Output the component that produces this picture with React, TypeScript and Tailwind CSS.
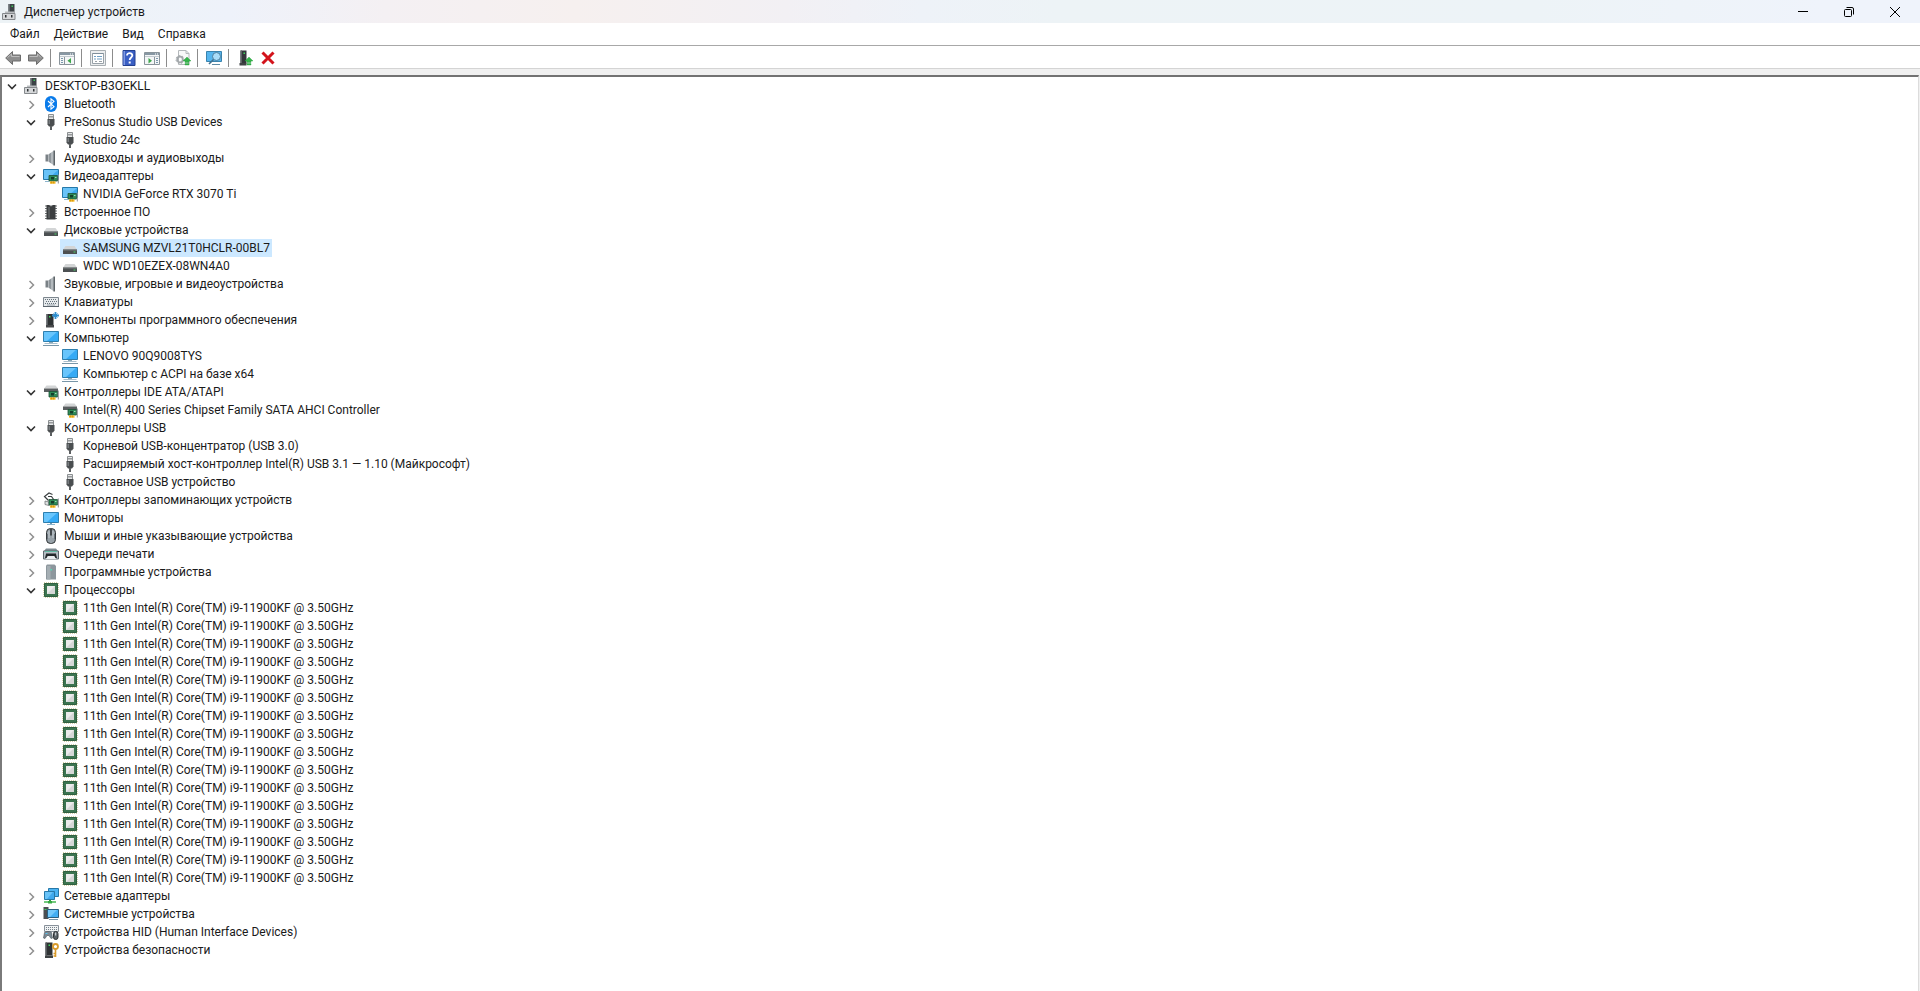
import { FC, ReactNode, useState } from "react";
import clsx from "clsx";

type IconName =
  | "computer"
  | "bluetooth"
  | "usb"
  | "speaker"
  | "display"
  | "firmware"
  | "disk"
  | "keyboard"
  | "software"
  | "pc"
  | "ide"
  | "storage"
  | "monitor"
  | "mouse"
  | "printer"
  | "tower"
  | "cpu"
  | "network"
  | "system"
  | "hid"
  | "security";

interface TreeNode {
  id: string;
  label: string;
  icon: IconName;
  open?: boolean;
  branch?: boolean;
  children?: TreeNode[];
}

const cpus: TreeNode[] = Array.from({ length: 16 }, (_, i) => ({
  id: `cpu-${i}`,
  label: "11th Gen Intel(R) Core(TM) i9-11900KF @ 3.50GHz",
  icon: "cpu",
}));

const tree: TreeNode = {
  id: "root",
  label: "DESKTOP-B3OEKLL",
  icon: "computer",
  open: true,
  branch: true,
  children: [
    { id: "bt", label: "Bluetooth", icon: "bluetooth", branch: true },
    {
      id: "presonus",
      label: "PreSonus Studio USB Devices",
      icon: "usb",
      open: true,
      branch: true,
      children: [{ id: "studio", label: "Studio 24c", icon: "usb" }],
    },
    { id: "audio", label: "Аудиовходы и аудиовыходы", icon: "speaker", branch: true },
    {
      id: "video",
      label: "Видеоадаптеры",
      icon: "display",
      open: true,
      branch: true,
      children: [{ id: "rtx", label: "NVIDIA GeForce RTX 3070 Ti", icon: "display" }],
    },
    { id: "firmware", label: "Встроенное ПО", icon: "firmware", branch: true },
    {
      id: "disks",
      label: "Дисковые устройства",
      icon: "disk",
      open: true,
      branch: true,
      children: [
        { id: "samsung", label: "SAMSUNG MZVL21T0HCLR-00BL7", icon: "disk" },
        { id: "wdc", label: "WDC WD10EZEX-08WN4A0", icon: "disk" },
      ],
    },
    { id: "sound", label: "Звуковые, игровые и видеоустройства", icon: "speaker", branch: true },
    { id: "keyboards", label: "Клавиатуры", icon: "keyboard", branch: true },
    { id: "software", label: "Компоненты программного обеспечения", icon: "software", branch: true },
    {
      id: "pc",
      label: "Компьютер",
      icon: "pc",
      open: true,
      branch: true,
      children: [
        { id: "lenovo", label: "LENOVO 90Q9008TYS", icon: "pc" },
        { id: "acpi", label: "Компьютер с ACPI на базе x64", icon: "pc" },
      ],
    },
    {
      id: "ide",
      label: "Контроллеры IDE ATA/ATAPI",
      icon: "ide",
      open: true,
      branch: true,
      children: [
        { id: "ahci", label: "Intel(R) 400 Series Chipset Family SATA AHCI Controller", icon: "ide" },
      ],
    },
    {
      id: "usb",
      label: "Контроллеры USB",
      icon: "usb",
      open: true,
      branch: true,
      children: [
        { id: "hub", label: "Корневой USB-концентратор (USB 3.0)", icon: "usb" },
        {
          id: "xhci",
          label: "Расширяемый хост-контроллер Intel(R) USB 3.1 — 1.10 (Майкрософт)",
          icon: "usb",
        },
        { id: "composite", label: "Составное USB устройство", icon: "usb" },
      ],
    },
    { id: "storage", label: "Контроллеры запоминающих устройств", icon: "storage", branch: true },
    { id: "monitors", label: "Мониторы", icon: "monitor", branch: true },
    { id: "mice", label: "Мыши и иные указывающие устройства", icon: "mouse", branch: true },
    { id: "print", label: "Очереди печати", icon: "printer", branch: true },
    { id: "swdev", label: "Программные устройства", icon: "tower", branch: true },
    { id: "cpus", label: "Процессоры", icon: "cpu", open: true, branch: true, children: cpus },
    { id: "net", label: "Сетевые адаптеры", icon: "network", branch: true },
    { id: "system", label: "Системные устройства", icon: "system", branch: true },
    { id: "hid", label: "Устройства HID (Human Interface Devices)", icon: "hid", branch: true },
    { id: "security", label: "Устройства безопасности", icon: "security", branch: true },
  ],
};

// small green board with gold contacts, shared by the adapter icons
const board = (
  <>
    <path d="M6 7.500h8.500V13H6z" fill="#2f8a57" stroke="#1c5236" strokeWidth=".8" />
    <path d="M8 9h3v2.500H8z" fill="#143f2a" />
    <path d="M12 9h1.500v1H12z" fill="#9fd8b4" />
    <path d="M7 13.400h5.500v2.300H7z" fill="#f2b41c" />
    <path d="M8.500 13.400v2M10.500 13.400v2" stroke="#b97d0a" strokeWidth=".5" />
    <path d="M15.300 6.500v9" stroke="#8c9196" strokeWidth="1" />
  </>
);

const drawings: Record<IconName, ReactNode> = {
  computer: (
    <>
      <path d="M6.500 0h6v9h-6z" fill="#3c4246" />
      <path d="M6.500 0h1.500v9H6.500z" fill="#666c70" />
      <path d="M9.500 1.500h1.500V3H9.500z" fill="#3fc45a" />
      <path d="M3 7.500h9.500V10H3z" fill="#b9bcbf" />
      <path d="M.5 9.500h12.500v6H.5z" fill="#d5d7d9" stroke="#85898c" />
      <path d="M3 11h1.500v2.500H3zM9 11h1.500v2.500H9z" fill="#2e3234" />
    </>
  ),
  bluetooth: (
    <>
      <rect x="2" width="12" height="16" rx="6" fill="#0a7bea" />
      <path d="M5 5l6 5.700L8 13.200V2.800l3 2.500L5 11" fill="none" stroke="#fff" strokeWidth="1.100" />
    </>
  ),
  usb: (
    <>
      <path d="M5.500.5h5v5h-5z" fill="#e4e6e7" stroke="#8b8f91" />
      <path d="M6.500 2h1v1.500h-1zM8.500 2h1v1.500h-1z" fill="#4b4f52" />
      <path d="M4.500 5h7v5.500L10 12.500H6l-1.500-2z" fill="#4a4e50" />
      <path d="M5.500 6h1.500v4H5.500z" fill="#767b7e" />
      <path d="M7 12h2v4H7z" fill="#5b5f61" />
    </>
  ),
  speaker: (
    <>
      <path d="M2.500 4.500h2.500v7H2.500z" fill="#7a8186" />
      <path d="M5.500 4.500L11 .5v15l-5.500-4z" fill="#b3b9bd" />
      <path d="M5.500 4.500L8 2.700v10.600l-2.500-1.800z" fill="#8f969b" />
      <path d="M10.500.5H12v15h-1.500z" fill="#5d6468" />
    </>
  ),
  display: (
    <>
      <path d="M.5 1.500h15v10H.5z" fill="#3fa9ee" stroke="#2678a8" />
      <path d="M1 2h14L5 11H1z" fill="#69c3f8" />
      <path d="M2 13.500h4" stroke="#8cb4cc" />
      {board}
    </>
  ),
  firmware: (
    <>
      <path
        d="M2 2h12M2 4.500h12M2 7h12M2 9.500h12M2 12h12M2 14.500h12"
        stroke="#6b6f71"
        strokeWidth="1.200"
      />
      <path d="M3.500 1H6l2 1.500L10 1h2.500v14.500h-9z" fill="#3b3e40" />
      <path d="M5 3h2v11H5z" fill="#55595b" />
    </>
  ),
  disk: (
    <>
      <path d="M3.500 6h9L15 9.500H1z" fill="#d3d5d6" />
      <path d="M1 9.500h14V14H1z" fill="#4c5052" />
      <path d="M1 9.500h14v1H1z" fill="#777c7e" />
      <path d="M11.500 11.500h2v1h-2z" fill="#4bd268" />
    </>
  ),
  keyboard: (
    <>
      <path d="M.5 3.500h15v9H.5z" fill="#e6eaec" stroke="#7d868e" />
      <path
        d="M2 5.500h12M3 7.500h11M2 9.500h12"
        stroke="#66717b"
        strokeDasharray="1 1"
      />
      <path d="M4 11h8" stroke="#9aa3ab" />
      <path d="M0 12.500h16" stroke="#5c666e" />
    </>
  ),
  software: (
    <>
      <path d="M3.500 2h7v11h-7z" fill="#2f3335" />
      <path d="M3.500 2H5v11H3.500z" fill="#5a5f62" />
      <path d="M6 4h1.500v1.500H6z" fill="#3ed35d" />
      <path d="M3 13h8v2.500H3z" fill="#47494b" />
      <path d="M12.500 0v7M9 3.500h7" stroke="#2f8fd0" strokeWidth="1.800" />
      <path d="M10.500 1.500l4 4M14.500 1.500l-4 4" stroke="#2f8fd0" />
    </>
  ),
  pc: (
    <>
      <path d="M.5 1.500h15v10H.5z" fill="#35aaf5" stroke="#2e7fae" />
      <path d="M1 2h13L4 11H1z" fill="#68c5fc" />
      <path d="M6 12h4v1H6z" fill="#8aa8b8" />
      <path d="M1.500 13.500h13" stroke="#a9bfcc" />
      <path d="M0 15.500h16" stroke="#7896a8" />
    </>
  ),
  ide: (
    <>
      <path d="M3.500 1.500h9L15 4.500H1z" fill="#d3d5d6" />
      <path d="M1 4.500h14V8H1z" fill="#5a5e60" />
      {board}
    </>
  ),
  storage: (
    <>
      <path
        d="M9.500 2.500L6 1 1.500 4.500l4 4M5 4.500h3.500L11 8"
        fill="none"
        stroke="#3c4042"
        strokeWidth="1.200"
      />
      <path d="M2 9l4 1v3.500l-4-1z" fill="#dfe1e2" stroke="#63686b" strokeWidth=".7" />
      {board}
    </>
  ),
  monitor: (
    <>
      <path d="M.5 2.500h15v10H.5z" fill="#35aaf5" stroke="#2e7fae" />
      <path d="M1 3h13L4 12H1z" fill="#68c5fc" />
      <path d="M7 13h2v1H7z" fill="#6f9bb5" />
      <path d="M4 14.500h8" stroke="#8cb4cc" />
    </>
  ),
  mouse: (
    <>
      <rect x="3.500" y=".5" width="9" height="15" rx="4" fill="#98a2a9" stroke="#2f3335" />
      <path d="M4 6v5.500M12 6v5.500" stroke="#3f474c" />
      <path d="M8 1v6.500" stroke="#2f3335" strokeWidth="1.600" />
      <path d="M6 3v7M10 3v7" stroke="#c4cbd0" />
    </>
  ),
  printer: (
    <>
      <path d="M3 2.500h10L15 5H1z" fill="#7f8b92" />
      <path d="M.5 5h15v8H.5z" fill="#b5bec4" stroke="#5e686e" />
      <path d="M2 5h12v1H2z" fill="#5fb8a2" />
      <path d="M3 7.500h10V10H3z" fill="#23282b" />
      <path d="M4 10h8l1 3H3z" fill="#e9edef" />
      <path d="M3 8l-1 4h1.500L5 9.500zM13 8l1 4h-1.500L11 9.500z" fill="#23282b" />
    </>
  ),
  tower: (
    <>
      <path d="M4 .5h7.500L13 2v13.500H3V1.500z" fill="#8d979d" />
      <path d="M4 2h3.500v13.500H4z" fill="#a5aeb3" />
      <path d="M7.500 5H9v1.500H7.500z" fill="#4fe0b5" />
    </>
  ),
  cpu: (
    <>
      <rect x="1" y="1" width="14" height="14" fill="none" stroke="#a9a455" strokeDasharray="1 1" />
      <path d="M1.500 1.500h13v13h-13z" fill="#3c7550" />
      <path d="M1.500 1.500h13v13h-13z" fill="none" stroke="#2f6041" />
      <path d="M4 4h8v8H4z" fill="#ececec" />
      <path d="M12 4v8H4z" fill="#d6d8d7" />
    </>
  ),
  network: (
    <>
      <path d="M5.500.5h10v8h-10z" fill="#4bb3f2" stroke="#2678a8" />
      <path d="M1.500 3.500h10v8h-10z" fill="#3fa9ee" stroke="#2678a8" />
      <path d="M2 4h8l-6 7H2z" fill="#69c3f8" />
      <path d="M6 12h2v2H6z" fill="#2f9e3b" />
      <path d="M1 14h12" stroke="#45b952" strokeWidth="1.500" />
      <path d="M5 13h4v2.500H5z" fill="#36a843" />
    </>
  ),
  system: (
    <>
      <path d="M.5 1h5v12h-5z" fill="#4a4f52" />
      <path d="M1.500 3h2v1h-2z" fill="#3ed35d" />
      <path d="M4.500 3.500h11v8h-11z" fill="#42aef3" stroke="#2a5f80" />
      <path d="M5 4h9l-7 7H5z" fill="#74c9fb" />
      <path d="M6 13.500h9" stroke="#7896a8" />
    </>
  ),
  hid: (
    <>
      <path d="M1.500 1.500h14v6h-14z" fill="#f1f3f4" stroke="#88919a" />
      <path d="M3 3.500h11M3 5.500h11" stroke="#75808a" strokeDasharray="1 1" />
      <path
        d="M.5 14l1-5.500L4 7.500h2.500l2 1 1 5.500-1.500.5-2-3h-2l-2 3z"
        fill="#7c8a94"
        stroke="#495259"
        strokeWidth=".6"
      />
      <path d="M2.500 9.500h2" stroke="#5cc4f0" />
      <rect x="10.500" y="7.500" width="4.500" height="8" rx="2.200" fill="#5a6268" stroke="#2f3335" />
      <path d="M12.700 8.500v3" stroke="#dfe4e7" />
    </>
  ),
  security: (
    <>
      <path d="M2.500.5h7v13h-7z" fill="#2f3335" />
      <path d="M2.500.5H4v13H2.500z" fill="#54595c" />
      <path d="M5.500 2.500H7V4H5.500z" fill="#3ed35d" />
      <path d="M2 13.500h8V16H2z" fill="#3f4244" />
      <circle cx="12.500" cy="4.500" r="2.500" fill="none" stroke="#d99a2b" strokeWidth="1.800" />
      <path d="M12.500 7v8M12.500 11.500h-2M12.500 14h-2" stroke="#d99a2b" strokeWidth="1.600" />
    </>
  ),
};

const Icon: FC<{ children: ReactNode }> = ({ children }) => (
  <svg viewBox="0 0 16 16" className="size-4 shrink-0" aria-hidden="true">
    {children}
  </svg>
);

// window frame used by the toolbar icons
const frame = (
  <>
    <path d="M.5 2.500h15v12H.5z" fill="#f4f6f7" stroke="#8a949b" />
    <path d="M1 3h14v2H1z" fill="#8797a3" />
    <path d="M11 4h1M13 4h1" stroke="#fff" />
    <path d="M1 6.500h14" stroke="#c3cad0" />
  </>
);

const upArrow = <path d="M12 7l4 4h-2v1.500h-4V11H8zM10 13.500h4v1.500h-4z" fill="#35b34a" stroke="#2a9c3e" strokeWidth=".4" />;

const toolbar: { label: string; icon: ReactNode }[][] = [
  [
    {
      label: "Назад",
      icon: (
        <>
          <path d="M.7 8L7.500 1.500V5h8v6h-8v3.500z" fill="#8e8e8e" stroke="#6c6c6c" />
          <path d="M2.500 7.500L6.500 4v2.500h8" fill="none" stroke="#bdbdbd" />
        </>
      ),
    },
    {
      label: "Вперёд",
      icon: (
        <>
          <path d="M15.300 8L8.500 1.500V5h-8v6h8v3.500z" fill="#8e8e8e" stroke="#6c6c6c" />
          <path d="M1.500 6.500h8V4l3.500 3.500" fill="none" stroke="#bdbdbd" />
        </>
      ),
    },
  ],
  [
    {
      label: "Показать дерево консоли",
      icon: (
        <>
          {frame}
          <path d="M5.500 7v7.500" stroke="#8a949b" />
          <path d="M2 8.500h2M2 10.500h2M2 12.500h2" stroke="#7b98ad" />
          <path d="M12 8v5.500l-3.500-2.700z" fill="#3da64a" />
        </>
      ),
    },
  ],
  [
    {
      label: "Свойства",
      icon: (
        <>
          <path d="M.5.500h15v15H.5z" fill="#eceeef" stroke="#a8aeb2" />
          <path d="M2.500 3.500h11v10h-11z" fill="#fff" stroke="#98a1a8" />
          <path d="M2.500 3.500h11" stroke="#7f8f9b" />
          <path d="M4 6.500h2M4 9h2M7 6.500h5M7 9h5" stroke="#6f9fc4" />
          <path d="M5 11.500h2M9 11.500h3" stroke="#9aa1a6" />
        </>
      ),
    },
  ],
  [
    {
      label: "Справка",
      icon: (
        <>
          <path d="M2 .5h12v15H2z" fill="#3a5fc4" stroke="#233f8f" />
          <path d="M2.500 1H4v14H2.500z" fill="#7d98e2" />
          <path
            d="M6 5.500C6 2.200 11.500 2.300 11.300 5.500 11.200 7.500 8.700 7.500 8.700 10"
            fill="none"
            stroke="#fff"
            strokeWidth="1.800"
          />
          <path d="M7.700 11.500h2v2h-2z" fill="#fff" />
        </>
      ),
    },
    {
      label: "Панель действий",
      icon: (
        <>
          {frame}
          <path d="M10.500 7v7.500" stroke="#8a949b" />
          <path d="M12 8.500h2M12 10.500h2M12 12.500h2" stroke="#7b98ad" />
          <path d="M4.500 8v5.500L8 10.800z" fill="#3da64a" />
        </>
      ),
    },
  ],
  [
    {
      label: "Обновить драйвер",
      icon: (
        <>
          <path d="M3.500.5h7.500l3 3v11h-10.500z" fill="#f8f9f9" stroke="#b4b8bb" />
          <path d="M11 .5v3h3" fill="none" stroke="#b4b8bb" />
          <circle cx="5" cy="9.500" r="2.800" fill="none" stroke="#a3a8ab" strokeWidth="1.800" />
          <circle cx="5" cy="9.500" r="4" fill="none" stroke="#a3a8ab" strokeDasharray="1.700 1.700" />
          {upArrow}
        </>
      ),
    },
  ],
  [
    {
      label: "Обновить конфигурацию оборудования",
      icon: (
        <>
          <path d="M.5 1.500h15v10H.5z" fill="#55b5ee" stroke="#3a83ad" />
          <path d="M6 14.500h8" stroke="#5f8ba5" />
          <circle cx="10.500" cy="6.500" r="4" fill="#a9dcf8" stroke="#4d7f9e" />
          <path d="M7.500 9.500L3 14" stroke="#41718f" strokeWidth="1.600" />
        </>
      ),
    },
  ],
  [
    {
      label: "Включить устройство",
      icon: (
        <>
          <path d="M3.500.5h6v13h-6z" fill="#33373a" />
          <path d="M3.500.5H5v13H3.500z" fill="#5d6265" />
          <path d="M6.500 2.500H8V4H6.500z" fill="#3ed35d" />
          <path d="M2.500 13h7v2.500h-7z" fill="#3f4244" />
          {upArrow}
        </>
      ),
    },
    {
      label: "Удалить устройство",
      icon: <path d="M2.500 2.500l11 11M13.500 2.500l-11 11" stroke="#d3131b" strokeWidth="3" />,
    },
  ],
];

const menu = ["Файл", "Действие", "Вид", "Справка"];

interface BranchProps {
  node: TreeNode;
  closed: Record<string, boolean>;
  selected: string;
  onToggle: (id: string) => void;
  onSelect: (id: string) => void;
}

const Branch: FC<BranchProps> = ({ node, closed, selected, onToggle, onSelect }) => {
  const isOpen = Boolean(node.open) && !closed[node.id];
  return (
    <li>
      <div className="flex h-[18px] items-center">
        {node.branch ? (
          <button
            type="button"
            aria-label={isOpen ? `Свернуть ${node.label}` : `Развернуть ${node.label}`}
            className="flex size-4 items-center justify-center"
            onClick={() => onToggle(node.id)}
          >
            <svg viewBox="0 0 10 10" className="size-[10px]" aria-hidden="true">
              {isOpen ? (
                <path d="M1 3.500l4 4 4-4" fill="none" stroke="#333" strokeWidth="1.600" />
              ) : (
                <path d="M3.500 2l4 4-4 4" fill="none" stroke="#909090" strokeWidth="1.500" />
              )}
            </svg>
          </button>
        ) : (
          <span className="size-4" />
        )}
        <button
          type="button"
          className={clsx(
            "ml-0.5 flex h-[18px] items-center gap-[5px] whitespace-nowrap px-0.5",
            selected === node.id && "bg-[#cce8ff]"
          )}
          onClick={() => onSelect(node.id)}
        >
          <Icon>{drawings[node.icon]}</Icon>
          <span>{node.label}</span>
        </button>
      </div>
      {isOpen && node.children && (
        <ul className="pl-[19px]">
          {node.children.map((child) => (
            <Branch
              key={child.id}
              node={child}
              closed={closed}
              selected={selected}
              onToggle={onToggle}
              onSelect={onSelect}
            />
          ))}
        </ul>
      )}
    </li>
  );
};

export default function App() {
  const [closed, setClosed] = useState<Record<string, boolean>>({});
  const [selected, setSelected] = useState("samsung");

  const handleToggle = (id: string) => {
    setClosed({ ...closed, [id]: !closed[id] });
  };

  return (
    <div className="flex h-screen flex-col overflow-hidden bg-white font-[Roboto,'Noto_Sans',sans-serif] text-[12px] leading-4 text-[#1a1a1a]">
      {/* title bar */}
      <header className="flex h-[23px] shrink-0 items-center bg-[linear-gradient(90deg,#edf3f6_0%,#eef2fa_12%,#f4f0f3_20%,#f6f0ef_30%,#f2f0f4_41%,#eef2f8_48%,#edf3f6_55%,#edf3f7_80%,#eff3fb_95%)] px-0.5">
        <Icon>{drawings.computer}</Icon>
        <h1 className="ml-1.5">Диспетчер устройств</h1>
        <div className="ml-auto flex h-full">
          <button type="button" aria-label="Свернуть" className="flex w-[46px] items-center justify-center">
            <svg viewBox="0 0 10 10" className="size-[10px]">
              <path d="M0 4.500h10" stroke="#000" />
            </svg>
          </button>
          <button type="button" aria-label="Восстановить" className="flex w-[46px] items-center justify-center">
            <svg viewBox="0 0 10 10" className="size-[10px]" fill="none" stroke="#000">
              <rect x=".5" y="2.500" width="7" height="7" rx="1" />
              <path d="M2.500.5H8A1.500 1.500 0 0 1 9.500 2v5.500" />
            </svg>
          </button>
          <button type="button" aria-label="Закрыть" className="flex w-[46px] items-center justify-center">
            <svg viewBox="0 0 10 10" className="size-[10px]">
              <path d="M0 0l10 10M10 0L0 10" stroke="#000" />
            </svg>
          </button>
        </div>
      </header>

      {/* menu */}
      <nav className="flex h-[23px] shrink-0 items-center border-b border-[#a8a8a8] pl-[3px]">
        {menu.map((item) => (
          <button key={item} type="button" className="px-[7px]">
            {item}
          </button>
        ))}
      </nav>

      {/* toolbar */}
      <div className="flex h-[23px] shrink-0 items-center border-b border-[#d4d4d4] pl-px pt-0.5">
        {toolbar.map((group, i) => (
          <div key={i} className="flex items-center">
            {i > 0 && <span className="ml-[3px] mr-1 h-[18px] w-px bg-[#8c8c8c]" />}
            {group.map(({ label, icon }) => (
              <button
                key={label}
                type="button"
                aria-label={label}
                title={label}
                className="flex h-5 w-[23px] items-center justify-center"
              >
                <Icon>{icon}</Icon>
              </button>
            ))}
          </div>
        ))}
      </div>

      {/* device tree */}
      <div className="flex min-h-0 flex-1 bg-[#f0f0f0] pr-px pt-1.5">
        <main className="min-w-0 flex-1 overflow-hidden border-l-2 border-r border-t-2 border-l-[#7a7a7a] border-r-[#dcdcdc] border-t-[#727272] bg-white pl-0.5">
          <ul>
            <Branch
              node={tree}
              closed={closed}
              selected={selected}
              onToggle={handleToggle}
              onSelect={setSelected}
            />
          </ul>
        </main>
      </div>
    </div>
  );
}
